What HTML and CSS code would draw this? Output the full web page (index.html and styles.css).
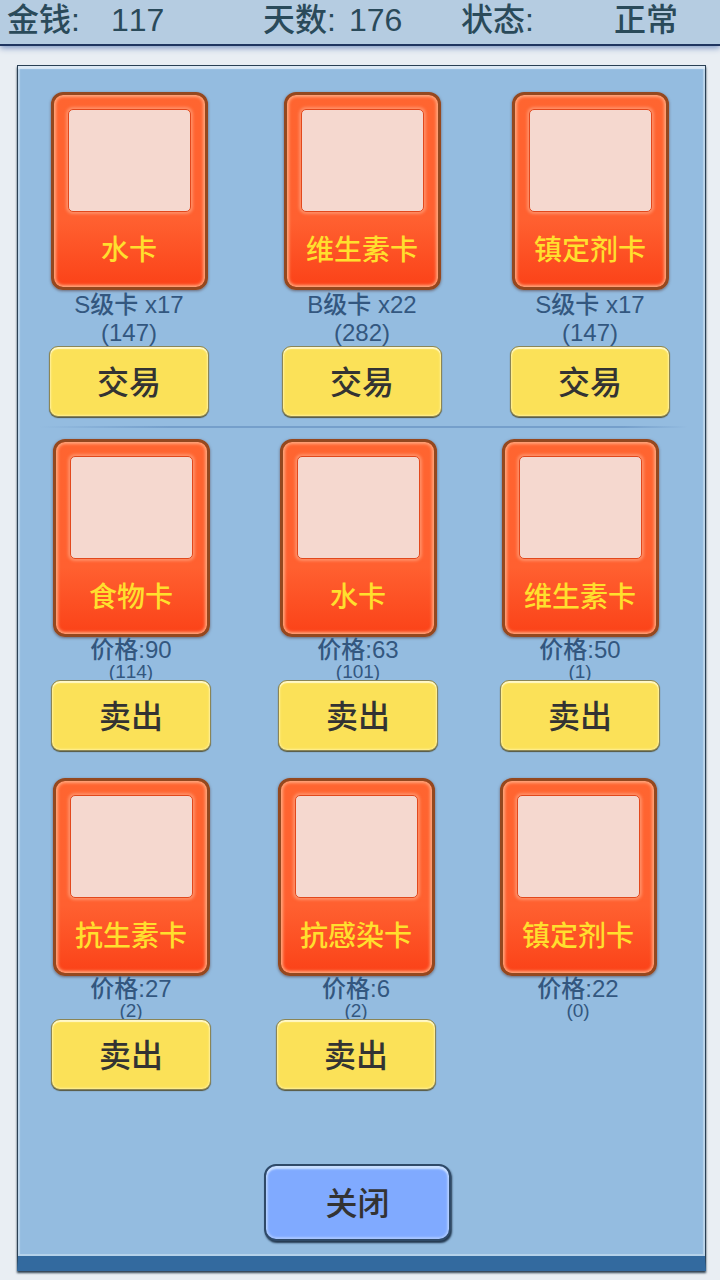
FILE: index.html
```html
<!DOCTYPE html>
<html lang="zh-CN">
<head>
    <meta charset="UTF-8">
    <meta name="viewport" content="width=device-width, initial-scale=1.0">
    <title>交易</title>
    <link rel="stylesheet" href="styles.css">
</head>
<body>

    <header class="status-bar">
        <span>金钱:</span>
        <span>117</span>
        <span>天数:</span>
        <span>176</span>
        <span>状态:</span>
        <span>正常</span>
    </header>

    <main class="panel">
        <section class="row trade-row">
            <div class="item">
                <div class="card"><div class="picture"></div><div class="name">水卡</div></div>
                <div class="info">S级卡 x17</div>
                <div class="info">(147)</div>
                <button type="button" class="action">交易</button>
            </div>
            <div class="item">
                <div class="card"><div class="picture"></div><div class="name">维生素卡</div></div>
                <div class="info">B级卡 x22</div>
                <div class="info">(282)</div>
                <button type="button" class="action">交易</button>
            </div>
            <div class="item">
                <div class="card"><div class="picture"></div><div class="name">镇定剂卡</div></div>
                <div class="info">S级卡 x17</div>
                <div class="info">(147)</div>
                <button type="button" class="action">交易</button>
            </div>
        </section>

        <hr class="divider">

        <section class="row sell-row">
            <div class="item">
                <div class="card"><div class="picture"></div><div class="name">食物卡</div></div>
                <div class="price">价格:90</div>
                <div class="count">(114)</div>
                <button type="button" class="action">卖出</button>
            </div>
            <div class="item">
                <div class="card"><div class="picture"></div><div class="name">水卡</div></div>
                <div class="price">价格:63</div>
                <div class="count">(101)</div>
                <button type="button" class="action">卖出</button>
            </div>
            <div class="item">
                <div class="card"><div class="picture"></div><div class="name">维生素卡</div></div>
                <div class="price">价格:50</div>
                <div class="count">(1)</div>
                <button type="button" class="action">卖出</button>
            </div>
        </section>

        <section class="row sell-row last-row">
            <div class="item">
                <div class="card"><div class="picture"></div><div class="name">抗生素卡</div></div>
                <div class="price">价格:27</div>
                <div class="count">(2)</div>
                <button type="button" class="action">卖出</button>
            </div>
            <div class="item">
                <div class="card"><div class="picture"></div><div class="name">抗感染卡</div></div>
                <div class="price">价格:6</div>
                <div class="count">(2)</div>
                <button type="button" class="action">卖出</button>
            </div>
            <div class="item">
                <div class="card"><div class="picture"></div><div class="name">镇定剂卡</div></div>
                <div class="price">价格:22</div>
                <div class="count">(0)</div>
            </div>
        </section>

        <button type="button" class="close">关闭</button>
    </main>

</body>
</html>
```
FILE: styles.css
```css
* {
    box-sizing: border-box;
}

body {
    margin: 0;
    min-height: 100vh;
    display: flex;
    flex-direction: column;
    background: #e9eef3;
    font-family: "Liberation Sans", "Noto Sans CJK SC", sans-serif;
    font-weight: 500;
    font-kerning: none;
}

.status-bar {
    display: grid;
    grid-template-columns: 104fr 152fr 86fr 112fr 153fr 106fr;
    padding-left: 7px;
    height: 46px;
    line-height: 40px;
    font-size: 32px;
    color: #2a4a5a;
    background: #b5cce1;
    border-bottom: 2px solid #1f3560;
    box-shadow: 0 2px 6px #7f97c4;
}

.panel {
    flex: 1;
    display: flex;
    flex-direction: column;
    margin: 19px 14px 9px 17px;
    padding: 26px 17px 15px 21px;
    background: #94bce0;
    border: 1px solid #2a4054;
    border-bottom: 15px solid #336a9f;
    box-shadow: inset 0 3px 1px #dce9f5, inset 2px 0 1px #b8d3ea, inset -2px 0 1px #b8d3ea, inset 0 -2px 0 #b5d2ea, 0 2px 2px #2c3f50;
}

.row {
    display: grid;
    padding-left: 12px;
}

.trade-row {
    grid-template-columns: 233fr 228fr 178fr;
    padding-left: 10px;
}

.sell-row {
    grid-template-columns: 227fr 222fr 188fr;
}

.last-row {
    grid-template-columns: 225fr 222fr 190fr;
    margin-top: 27px;
}

.item {
    width: 160px;
    display: flex;
    flex-direction: column;
    align-items: center;
    color: #33577f;
}

.card {
    width: 157px;
    height: 198px;
    padding: 14px;
    border: 3px solid #94481f;
    border-radius: 12px;
    background: linear-gradient(#ff6530 0%, #ff6030 65%, #fb4218 100%);
    box-shadow: inset 0 0 3px 2px #ffa67c, 0 1px 3px #6b6874;
}

.picture {
    height: 103px;
    background: #f5d8cf;
    border: 1px solid #e2481c;
    border-radius: 5px;
    box-shadow: 0 0 3px 2px #ff8f66;
}

.name {
    margin-top: 21px;
    line-height: 36px;
    font-size: 28px;
    text-align: center;
    color: #ffdf2e;
}

.info {
    font-size: 24px;
    line-height: 28px;
}

.price {
    font-size: 24px;
    line-height: 24px;
}

.count {
    font-size: 19px;
    line-height: 19px;
}

.info,
.price,
.count {
    padding-top: 1px;
    margin-bottom: -1px;
}

button {
    font-family: inherit;
    font-weight: 500;
    font-size: 32px;
    color: #333;
    cursor: pointer;
}

.action {
    width: 160px;
    height: 71px;
    padding: 0 0 4px;
    background: #fbe158;
    border: 1px solid #8a8556;
    border-radius: 9px;
    box-shadow: inset 0 2px 1px #fff8c8, inset 0 0 2px 1px #fff09a, 0 1px 1px #55553c;
}

.divider {
    width: 100%;
    height: 2px;
    margin: 9px 0 11px;
    border: none;
    background: linear-gradient(to right, transparent, #759fcb 20%, #759fcb 90%, transparent);
}

.close {
    align-self: center;
    width: 187px;
    height: 77px;
    padding: 0 0 4px;
    margin-top: auto;
    margin-right: 12px;
    background: #80aaff;
    border: 2px solid #2f4a68;
    border-radius: 12px;
    box-shadow: inset 0 3px 2px #c9dfff, inset 0 0 2px 2px #a8c6ff, 1px 2px 2px #20354c;
}
```
